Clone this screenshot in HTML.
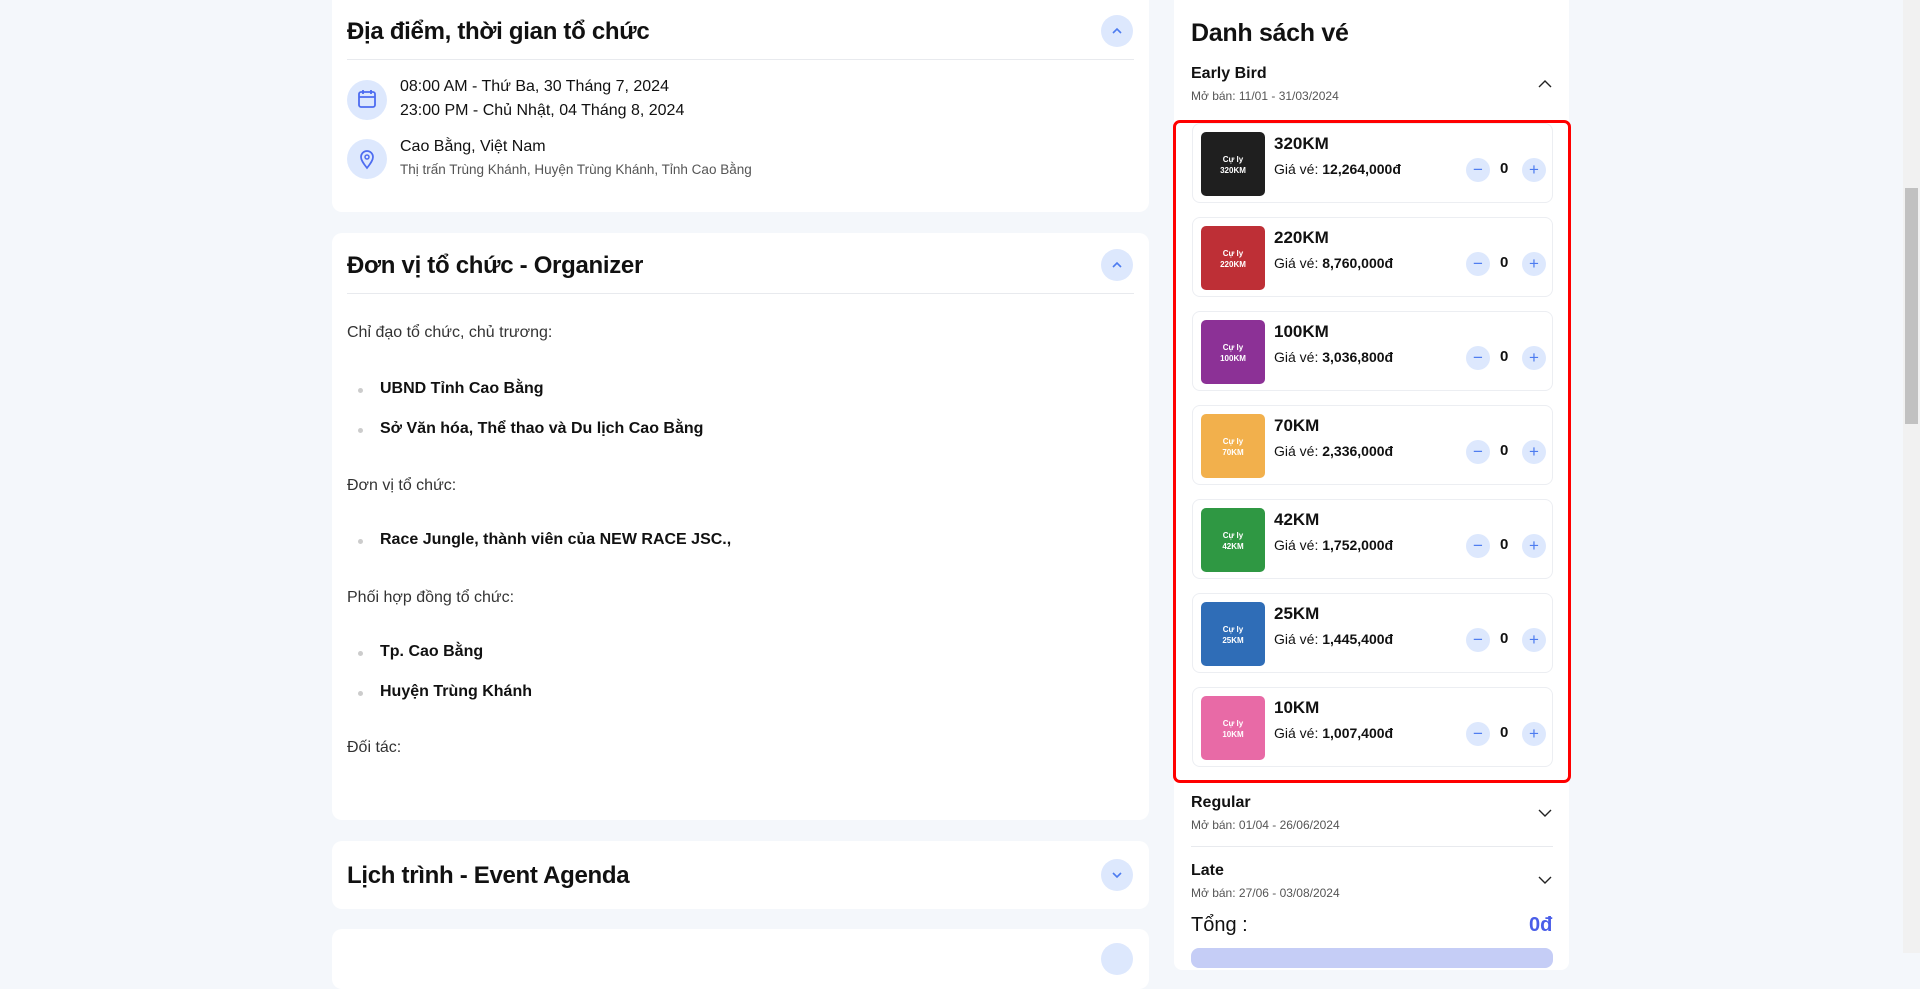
<!DOCTYPE html>
<html><head><meta charset="utf-8"><style>
*{box-sizing:border-box;margin:0;padding:0}
body{width:1920px;height:953px;overflow:hidden;background:#f4f7fb;font-family:"Liberation Sans","Noto Sans CJK SC",sans-serif;color:#111;position:relative}
.a{position:absolute;white-space:nowrap}
.card{position:absolute;background:#fff;border-radius:10px}
.h{font-size:24px;font-weight:bold;color:#111;letter-spacing:-0.3px}
.btn{position:absolute;width:32px;height:32px;border-radius:50%;background:#dde8fd}
.div{position:absolute;height:1px;background:#e8eaee}
.t{font-size:16px}
.b{font-size:16px;font-weight:bold}
.dot{position:absolute;width:5px;height:5px;border-radius:50%;background:#ccc}
.tk{position:absolute;left:1192px;width:361px;height:80px;border:1px solid #eceef2;border-radius:8px;background:#fff}
.img{position:absolute;left:8px;top:8px;width:64px;height:64px;border-radius:5px;color:#fff;font-size:8px;font-weight:bold;text-align:center;line-height:11px;padding-top:22px}
.tn{position:absolute;left:81px;top:10px;font-size:17px;font-weight:bold}
.tp{position:absolute;left:81px;top:37px;font-size:14px}
.cb{position:absolute;top:34px;width:24px;height:24px;border-radius:50%;background:#dde8fd;color:#4d7cf0;font-size:17px;line-height:23px;text-align:center}
.q{position:absolute;left:307px;top:36px;font-size:15px;font-weight:bold}
.sm{font-size:12px;color:#555}
</style></head><body>

<div class="card" style="left:332px;top:-10px;width:817px;height:222px"></div>
<div class="a h" style="left:347px;top:18px">Địa điểm, thời gian tổ chức</div>
<div class="btn" style="left:1101px;top:15px"><svg width="32" height="32"><path d="M12 18l4-4 4 4" fill="none" stroke="#4d7cf0" stroke-width="1.6"/></svg></div>
<div class="div" style="left:347px;top:59px;width:787px"></div>
<div class="a" style="left:347px;top:80px;width:40px;height:40px;border-radius:50%;background:#dde8fd"><svg width="40" height="40"><rect x="12" y="12" width="16" height="15" rx="2" fill="none" stroke="#4d6cf0" stroke-width="1.8"/><path d="M12 17h16M16 10v4M24 10v4" stroke="#4d6cf0" stroke-width="1.8"/></svg></div>
<div class="a t" style="left:400px;top:78px">08:00 AM - Thứ Ba, 30 Tháng 7, 2024</div>
<div class="a t" style="left:400px;top:102px">23:00 PM - Chủ Nhật, 04 Tháng 8, 2024</div>
<div class="a" style="left:347px;top:139px;width:40px;height:40px;border-radius:50%;background:#dde8fd"><svg width="40" height="40"><path d="M20 29c-4-5-6-8-6-11a6 6 0 0 1 12 0c0 3-2 6-6 11z" fill="none" stroke="#4d6cf0" stroke-width="1.7"/><circle cx="20" cy="18" r="2" fill="none" stroke="#4d6cf0" stroke-width="1.5"/></svg></div>
<div class="a t" style="left:400px;top:138px">Cao Bằng, Việt Nam</div>
<div class="a" style="left:400px;top:162px;font-size:13.5px;color:#555">Thị trấn Trùng Khánh, Huyện Trùng Khánh, Tỉnh Cao Bằng</div>

<div class="card" style="left:332px;top:233px;width:817px;height:587px"></div>
<div class="a h" style="left:347px;top:252px">Đơn vị tổ chức - Organizer</div>
<div class="btn" style="left:1101px;top:249px"><svg width="32" height="32"><path d="M12 18l4-4 4 4" fill="none" stroke="#4d7cf0" stroke-width="1.6"/></svg></div>
<div class="div" style="left:347px;top:293px;width:787px"></div>
<div class="a t" style="left:347px;top:324px;color:#333">Chỉ đạo tổ chức, chủ trương:</div>
<div class="dot" style="left:358px;top:388px"></div><div class="a b" style="left:380px;top:380px">UBND Tỉnh Cao Bằng</div>
<div class="dot" style="left:358px;top:428px"></div><div class="a b" style="left:380px;top:420px">Sở Văn hóa, Thể thao và Du lịch Cao Bằng</div>
<div class="a t" style="left:347px;top:477px;color:#333">Đơn vị tổ chức:</div>
<div class="dot" style="left:358px;top:539px"></div><div class="a b" style="left:380px;top:531px">Race Jungle, thành viên của NEW RACE JSC.,</div>
<div class="a t" style="left:347px;top:589px;color:#333">Phối hợp đồng tổ chức:</div>
<div class="dot" style="left:358px;top:651px"></div><div class="a b" style="left:380px;top:643px">Tp. Cao Bằng</div>
<div class="dot" style="left:358px;top:691px"></div><div class="a b" style="left:380px;top:683px">Huyện Trùng Khánh</div>
<div class="a t" style="left:347px;top:739px;color:#333">Đối tác:</div>

<div class="card" style="left:332px;top:841px;width:817px;height:68px"></div>
<div class="a h" style="left:347px;top:862px">Lịch trình - Event Agenda</div>
<div class="btn" style="left:1101px;top:859px"><svg width="32" height="32"><path d="M12 14l4 4 4-4" fill="none" stroke="#4d7cf0" stroke-width="1.6"/></svg></div>
<div class="card" style="left:332px;top:929px;width:817px;height:60px"></div>
<div class="btn" style="left:1101px;top:943px"></div>

<div class="card" style="left:1174px;top:-10px;width:395px;height:980px;border-radius:8px"></div>
<div class="a" style="left:1191px;top:19px;font-size:25px;font-weight:bold;letter-spacing:-0.3px">Danh sách vé</div>
<div class="a" style="left:1191px;top:65px;font-size:16px;font-weight:bold">Early Bird</div>
<div class="a sm" style="left:1191px;top:89px">Mở bán: 11/01 - 31/03/2024</div>
<svg class="a" style="left:1537px;top:78px" width="16" height="12"><path d="M2 9l6-6 6 6" fill="none" stroke="#222" stroke-width="1.4"/></svg>

<div class="tk" style="top:123px"><div class="img" style="background:#1f1f1f">Cự ly<br>320KM</div><div class="tn">320KM</div><div class="tp">Giá vé: <b>12,264,000đ</b></div><div class="cb" style="left:273px">−</div><div class="q">0</div><div class="cb" style="left:329px">+</div></div>
<div class="tk" style="top:217px"><div class="img" style="background:#be2f36">Cự ly<br>220KM</div><div class="tn">220KM</div><div class="tp">Giá vé: <b>8,760,000đ</b></div><div class="cb" style="left:273px">−</div><div class="q">0</div><div class="cb" style="left:329px">+</div></div>
<div class="tk" style="top:311px"><div class="img" style="background:#8c3196">Cự ly<br>100KM</div><div class="tn">100KM</div><div class="tp">Giá vé: <b>3,036,800đ</b></div><div class="cb" style="left:273px">−</div><div class="q">0</div><div class="cb" style="left:329px">+</div></div>
<div class="tk" style="top:405px"><div class="img" style="background:#f2b04c">Cự ly<br>70KM</div><div class="tn">70KM</div><div class="tp">Giá vé: <b>2,336,000đ</b></div><div class="cb" style="left:273px">−</div><div class="q">0</div><div class="cb" style="left:329px">+</div></div>
<div class="tk" style="top:499px"><div class="img" style="background:#2f9843">Cự ly<br>42KM</div><div class="tn">42KM</div><div class="tp">Giá vé: <b>1,752,000đ</b></div><div class="cb" style="left:273px">−</div><div class="q">0</div><div class="cb" style="left:329px">+</div></div>
<div class="tk" style="top:593px"><div class="img" style="background:#2f6db7">Cự ly<br>25KM</div><div class="tn">25KM</div><div class="tp">Giá vé: <b>1,445,400đ</b></div><div class="cb" style="left:273px">−</div><div class="q">0</div><div class="cb" style="left:329px">+</div></div>
<div class="tk" style="top:687px"><div class="img" style="background:#e86aa6">Cự ly<br>10KM</div><div class="tn">10KM</div><div class="tp">Giá vé: <b>1,007,400đ</b></div><div class="cb" style="left:273px">−</div><div class="q">0</div><div class="cb" style="left:329px">+</div></div>

<div class="a" style="left:1173px;top:120px;width:398px;height:663px;border:3px solid #f00;border-radius:7px"></div>

<div class="a" style="left:1191px;top:794px;font-size:16px;font-weight:bold">Regular</div>
<div class="a sm" style="left:1191px;top:818px">Mở bán: 01/04 - 26/06/2024</div>
<svg class="a" style="left:1537px;top:807px" width="16" height="12"><path d="M2 3l6 6 6-6" fill="none" stroke="#222" stroke-width="1.4"/></svg>
<div class="div" style="left:1191px;top:846px;width:362px"></div>
<div class="a" style="left:1191px;top:862px;font-size:16px;font-weight:bold">Late</div>
<div class="a sm" style="left:1191px;top:886px">Mở bán: 27/06 - 03/08/2024</div>
<svg class="a" style="left:1537px;top:874px" width="16" height="12"><path d="M2 3l6 6 6-6" fill="none" stroke="#222" stroke-width="1.4"/></svg>
<div class="a" style="left:1191px;top:914px;font-size:20px">Tổng :</div>
<div class="a" style="left:1529px;top:914px;font-size:20px;font-weight:bold;color:#4a5ee8">0đ</div>
<div class="a" style="left:1191px;top:948px;width:362px;height:20px;border-radius:8px;background:#c5cdf6"></div>

<div class="a" style="left:1903px;top:0;width:17px;height:953px;background:#f1f1f1"></div>
<div class="a" style="left:1905px;top:188px;width:13px;height:236px;background:#c1c1c1"></div>
</body></html>
